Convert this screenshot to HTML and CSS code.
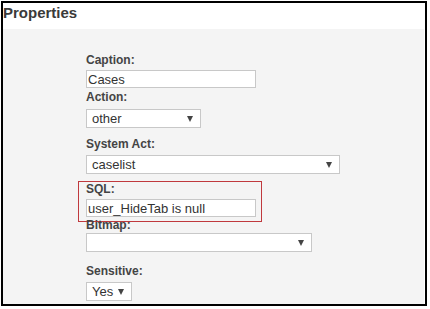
FILE: index.html
```html
<!DOCTYPE html>
<html lang="en">
<head>
    <meta charset="UTF-8">
    <meta name="viewport" content="width=device-width, initial-scale=1.0">
    <title>Properties</title>
    <link rel="stylesheet" href="styles.css">
</head>
<body>
    <div class="frame">
        <div class="header">Properties</div>
        <div class="panel">
            <div class="field caption-field">
                <div class="label">Caption:</div>
                <div class="input w-170">Cases</div>
            </div>
            <div class="field action-field">
                <div class="label">Action:</div>
                <div class="select w-115"><span>other</span><span class="arrow"></span></div>
            </div>
            <div class="field system-field">
                <div class="label">System Act:</div>
                <div class="select w-254"><span>caselist</span><span class="arrow"></span></div>
            </div>
            <div class="field sql-field">
                <!-- red highlight box -->
                <div class="highlight"></div>
                <div class="label">SQL:</div>
                <div class="input w-170">user_HideTab is null</div>
            </div>
            <div class="field bitmap-field">
                <div class="label">Bitmap:</div>
                <div class="select w-226"><span></span><span class="arrow"></span></div>
            </div>
            <div class="field sensitive-field">
                <div class="label">Sensitive:</div>
                <div class="select w-46"><span>Yes</span><span class="arrow"></span></div>
            </div>
        </div>
    </div>
</body>
</html>
```

FILE: styles.css
```css
body {
    margin: 0;
    background-color: #fff;
    font-family: 'Liberation Sans', Arial, sans-serif;
    color: #333;
}
.frame {
    margin: 1px 0 0 1px;
    width: 422px;
    height: 301px;
    border: 2px solid #000;
    display: flex;
    flex-direction: column;
    background-color: #fff;
}
.header {
    height: 25px;
    padding-top: 1px;
    font-size: 15px;
    line-height: 17px;
    font-weight: 700;
    color: #3a3a3a;
}
.panel {
    flex: 1;
    margin-right: 1px;
    background-color: #f4f4f4;
    padding: 24px 0 0 83px;
}
.field {
    position: relative;
}
.label {
    font-size: 12px;
    line-height: 14px;
    font-weight: 700;
    color: #444;
}
.input,
.select {
    box-sizing: border-box;
    background-color: #fff;
    border: 1px solid #c8c8c8;
    font-size: 13px;
    color: #333;
    display: flex;
    align-items: center;
}
.input {
    height: 18px;
    padding-left: 1px;
}
.select {
    height: 19px;
    padding: 0 7px 0 5px;
    justify-content: space-between;
}
.arrow {
    width: 0;
    height: 0;
    border-left: 3.5px solid transparent;
    border-right: 3.5px solid transparent;
    border-top: 6px solid #444;
}
.w-170 { width: 170px; }
.w-115 { width: 115px; }
.w-254 { width: 254px; }
.w-226 { width: 226px; }
.w-46 { width: 46px; }

/* spacing between fields */
.caption-field .input { margin-top: 3px; }
.action-field { margin-top: 2px; }
.action-field .select { margin-top: 5px; }
.system-field { margin-top: 9px; }
.system-field .select { margin-top: 4px; }
.sql-field { margin-top: 8px; }
.sql-field .input { margin-top: 3px; }
.bitmap-field { margin-top: 1px; }
.bitmap-field .select { margin-top: 1px; }
.sensitive-field { margin-top: 12px; }
.sensitive-field .select { margin-top: 4px; }

.highlight {
    position: absolute;
    left: -8px;
    top: -1px;
    width: 182px;
    height: 39px;
    border: 1px solid #c0393d;
}
```
